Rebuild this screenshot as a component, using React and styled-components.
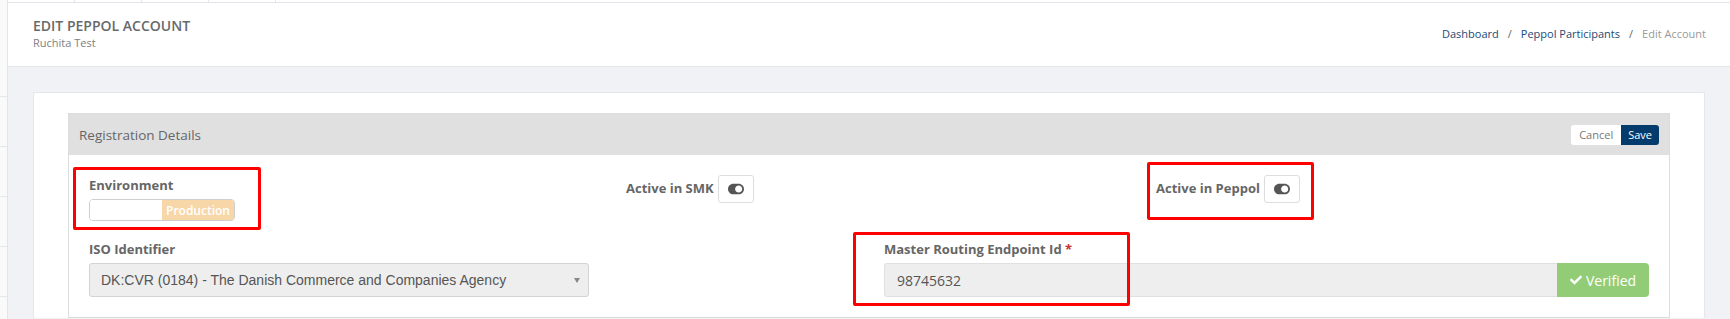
import React from 'react'
import styled, { createGlobalStyle } from 'styled-components'
import { FaToggleOn, FaCheck } from 'react-icons/fa'

const GlobalStyle = createGlobalStyle`
  html, body {
    margin: 0;
    padding: 0;
    background: #f1f2f6;
    font-family: "Open Sans", "Noto Sans", sans-serif;
  }
  * {
    box-sizing: border-box;
  }
`

const Shell = styled.div`
  display: flex;
  min-height: 319px;
`

const Sidebar = styled.div`
  width: 8px;
  flex-shrink: 0;
  background: #fafafa;
  border-right: 1px solid #e3e5ea;
  padding-top: 47px;
`

const SideItem = styled.div`
  height: 50px;
  border-bottom: 1px solid #e6e7ea;
`

const Main = styled.div`
  flex: 1;
  display: flex;
  flex-direction: column;
`

const TopTabs = styled.div`
  display: flex;
  height: 3px;
  background: #fff;
  border-bottom: 1px solid #e3e5ea;
`

const Tab = styled.div`
  width: 67px;
  border-right: 1px solid #e3e5ea;
`

const Header = styled.div`
  height: 64px;
  background: #fff;
  border-bottom: 1px solid #e3e5ea;
  display: flex;
  justify-content: space-between;
  align-items: center;
  padding: 0 24px 0 25px;
`

const TitleBlock = styled.div`
  display: flex;
  flex-direction: column;
  margin-top: -3px;
`

const Title = styled.h1`
  margin: 0;
  font-size: 14px;
  line-height: 19px;
  font-weight: 600;
  color: #676a6c;
`

const Subtitle = styled.div`
  font-size: 11px;
  line-height: 15px;
  color: #7d7f82;
`

const Breadcrumb = styled.nav`
  display: flex;
  align-items: center;
  font-size: 11px;
  margin-top: -3px;
`

const Crumb = styled.span`
  color: ${p => (p.$active ? '#9a9a9a' : '#1c4a75')};
`

const Sep = styled.span`
  color: #666;
  padding: 0 9px;
`

const Content = styled.div`
  flex: 1;
  padding: 25px 25px 0 25px;
`

const Card = styled.div`
  background: #fff;
  border: 1px solid #e4e6eb;
  border-bottom: none;
  border-radius: 2px;
  padding: 20px 34px 0 34px;
`

const Panel = styled.div`
  border: 1px solid #dcdcdc;
`

const PanelHeading = styled.div`
  height: 41px;
  background: #e0e0e0;
  display: flex;
  align-items: center;
  justify-content: space-between;
  padding: 0 10px;
  font-size: 13.5px;
  color: #666;
`

const ButtonGroup = styled.div`
  display: flex;
`

const HeadButton = styled.button`
  font-family: "Open Sans", sans-serif;
  font-size: 11px;
  height: 20px;
  padding: 0 ${p => (p.$primary ? '7px' : '8px')};
  border: none;
  color: ${p => (p.$primary ? '#fff' : '#777')};
  background: ${p => (p.$primary ? '#033b6c' : '#fff')};
  border-radius: ${p => (p.$primary ? '0 3px 3px 0' : '3px 0 0 3px')};
`

const PanelBody = styled.div`
  padding: 20px 20px 20px 20px;
`

const TopRow = styled.div`
  display: grid;
  grid-template-columns: repeat(3, 1fr);
  column-gap: 30px;
`

const BottomRow = styled.div`
  display: grid;
  grid-template-columns: 500px 1fr 765px;
  column-gap: 30px;
  margin-top: 18px;
`

const Field = styled.div`
  position: relative;
  display: flex;
  flex-direction: ${p => (p.$inline ? 'row' : 'column')};
  align-items: ${p => (p.$inline ? 'center' : 'stretch')};
  align-self: start;
  gap: ${p => (p.$inline ? '4px' : '5px')};
  padding-left: ${p => (p.$inline ? '7px' : '0')};
`

const Label = styled.label`
  font-size: 13px;
  line-height: 18px;
  font-weight: 700;
  color: #666;
  margin-top: ${p => (p.$inline ? '-3px' : '1px')};
`

const Required = styled.span`
  color: #c9302c;
`

const Highlight = styled.div`
  position: absolute;
  border: 3px solid #ff0000;
  border-radius: 2px;
  pointer-events: none;
  top: ${p => p.$top}px;
  left: ${p => p.$left}px;
  width: ${p => p.$width}px;
  height: ${p => p.$height}px;
`

const EnvToggle = styled.div`
  display: flex;
  width: 146px;
  height: 22px;
  border: 1px solid #cfcfcf;
  border-radius: 4px;
  overflow: hidden;
`

const ToggleHandle = styled.div`
  flex: 1;
  background: #fff;
`

const ToggleState = styled.div`
  flex: 1;
  background: #f7d7a8;
  color: #fff;
  font-size: 12px;
  font-weight: 600;
  display: flex;
  align-items: center;
  justify-content: center;
`

const SwitchButton = styled.button`
  width: 36px;
  height: 28px;
  border: 1px solid #ddd;
  border-radius: 3px;
  background: #fff;
  display: flex;
  align-items: center;
  justify-content: center;
  color: #555;
  padding: 0;
`

const SelectBox = styled.div`
  height: 34px;
  background: #eee;
  border: 1px solid #d3d3d3;
  border-radius: 3px;
  display: flex;
  align-items: center;
  justify-content: space-between;
  padding: 0 8px 0 11px;
  font-family: "Liberation Sans", Arial, sans-serif;
  font-size: 14px;
  color: #555;
`

const Caret = styled.span`
  width: 0;
  height: 0;
  border-left: 3px solid transparent;
  border-right: 3px solid transparent;
  border-top: 5px solid #888;
`

const InputGroup = styled.div`
  display: flex;
  height: 34px;
`

const TextInput = styled.div`
  flex: 1;
  background: #eee;
  border: 1px solid #e0e0e0;
  border-right: none;
  border-radius: 3px 0 0 3px;
  display: flex;
  align-items: center;
  padding: 0 12px;
  font-size: 14px;
  color: #555;
`

const VerifiedButton = styled.div`
  width: 92px;
  background: #93cc76;
  color: #fff;
  border-radius: 0 4px 4px 0;
  display: flex;
  align-items: center;
  justify-content: center;
  gap: 4px;
  font-size: 14px;
`

export default function App() {
  return (
    <>
      <GlobalStyle />
      <Shell>
        <Sidebar>
          <SideItem />
          <SideItem />
          <SideItem />
          <SideItem />
          <SideItem />
        </Sidebar>
        <Main>
          <TopTabs>
            <Tab />
            <Tab />
            <Tab />
            <Tab />
          </TopTabs>
          <Header>
            <TitleBlock>
              <Title>EDIT PEPPOL ACCOUNT</Title>
              <Subtitle>Ruchita Test</Subtitle>
            </TitleBlock>
            <Breadcrumb>
              <Crumb>Dashboard</Crumb>
              <Sep>/</Sep>
              <Crumb>Peppol Participants</Crumb>
              <Sep>/</Sep>
              <Crumb $active>Edit Account</Crumb>
            </Breadcrumb>
          </Header>
          <Content>
            <Card>
              <Panel>
                <PanelHeading>
                  <span>Registration Details</span>
                  <ButtonGroup>
                    <HeadButton>Cancel</HeadButton>
                    <HeadButton $primary>Save</HeadButton>
                  </ButtonGroup>
                </PanelHeading>
                <PanelBody>
                  <TopRow>
                    <Field>
                      <Label>Environment</Label>
                      <EnvToggle>
                        <ToggleHandle />
                        <ToggleState>Production</ToggleState>
                      </EnvToggle>
                      <Highlight $top={-8} $left={-16} $width={188} $height={63} />
                    </Field>
                    <Field $inline>
                      <Label $inline>Active in SMK</Label>
                      <SwitchButton>
                        <FaToggleOn size={16} />
                      </SwitchButton>
                    </Field>
                    <Field $inline>
                      <Label $inline>Active in Peppol</Label>
                      <SwitchButton>
                        <FaToggleOn size={16} />
                      </SwitchButton>
                      <Highlight $top={-13} $left={-2} $width={167} $height={58} />
                    </Field>
                  </TopRow>
                  <BottomRow>
                    <Field>
                      <Label>ISO Identifier</Label>
                      <SelectBox>
                        <span>DK:CVR (0184) - The Danish Commerce and Companies Agency</span>
                        <Caret />
                      </SelectBox>
                    </Field>
                    <div />
                    <Field>
                      <Label>
                        Master Routing Endpoint Id <Required>*</Required>
                      </Label>
                      <InputGroup>
                        <TextInput>98745632</TextInput>
                        <VerifiedButton>
                          <FaCheck size={12} />
                          Verified
                        </VerifiedButton>
                      </InputGroup>
                      <Highlight $top={-7} $left={-31} $width={277} $height={74} />
                    </Field>
                  </BottomRow>
                </PanelBody>
              </Panel>
            </Card>
          </Content>
        </Main>
      </Shell>
    </>
  )
}
